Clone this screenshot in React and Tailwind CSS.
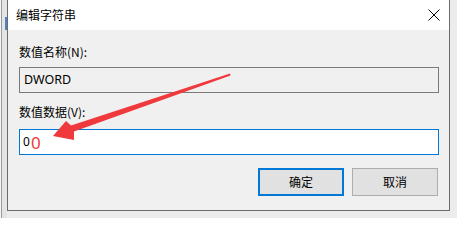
export default function App() {
  return (
    <div className="relative w-[457px] h-[218px] bg-[#ececec] overflow-hidden flex font-['Segoe_UI','Noto_Sans','Noto_Sans_CJK_SC',sans-serif] text-[12px] text-black">
      <div className="w-[7px] h-full flex">
        <div className="w-px bg-[#f4f4f4]" />
        <div className="w-px bg-[#9a9a9a]" />
        <div className="flex-1 bg-[#e4e4e4] pt-[17px]">
          <div className="ml-[3px] w-[2px] h-[13px] bg-[#4a86c5]" />
        </div>
      </div>
      <div className="w-[443px] h-[211px] border-x border-b border-[#6b6b6b] flex flex-col bg-[#f0f0f0]">
        <div className="h-[30px] bg-white flex items-center justify-between pl-[8px]">
          <span className="font-['Noto_Sans_CJK_SC',sans-serif] leading-[16px]">编辑字符串</span>
          <svg width="12" height="12" viewBox="0 0 12 12" className="mr-[9px]">
            <path d="M0.5 0.5 L11.5 11.5 M11.5 0.5 L0.5 11.5" stroke="#000" strokeWidth="1" fill="none" />
          </svg>
        </div>
        <div className="flex flex-col pl-[11px] pr-[10px] pt-[14px]">
          <div className="leading-[16px] font-['Noto_Sans_CJK_SC',sans-serif]">数值名称(N):</div>
          <div className="mt-[7px] h-[26px] border border-[#7a7a7a] bg-[#f0f0f0] flex items-center pl-[4px]">
            <span className="font-['Segoe_UI','Noto_Sans',sans-serif] text-[12.5px]">DWORD</span>
          </div>
          <div className="mt-[11px] leading-[16px] font-['Noto_Sans_CJK_SC',sans-serif]">数值数据(V):</div>
          <div className="mt-[9px] h-[26px] border border-[#0078d7] bg-white flex items-center pl-[3px]">
            <span className="font-['Noto_Sans',sans-serif] text-[12px]">0</span>
            <span className="font-['Noto_Sans',sans-serif] text-[17px] text-[#f03a3a] leading-none ml-[1px]">0</span>
          </div>
          <div className="mt-[13px] flex justify-end gap-[8px] pr-px">
            <button className="w-[86px] h-[28px] border-2 border-[#0078d7] bg-[#e1e1e1] flex items-center justify-center font-['Noto_Sans_CJK_SC',sans-serif]">确定</button>
            <button className="w-[86px] h-[28px] border border-[#adadad] bg-[#e1e1e1] flex items-center justify-center font-['Noto_Sans_CJK_SC',sans-serif]">取消</button>
          </div>
        </div>
      </div>
      <svg className="absolute inset-0 pointer-events-none" width="457" height="218" viewBox="0 0 457 218">
        <polygon
          points="53,136 66,121 71,125.5 230,73.5 230.5,75.5 74,131.5 74,140"
          fill="#f0393c"
        />
      </svg>
    </div>
  );
}
